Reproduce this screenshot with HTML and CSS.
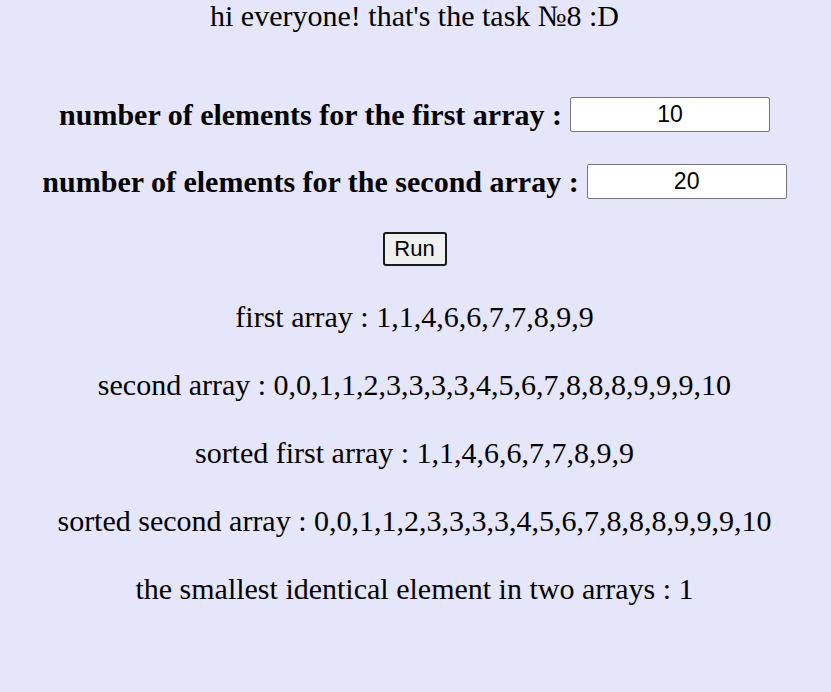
FILE: index.html
```html
<!DOCTYPE html>
<html>
<head>
<meta charset="utf-8">
<link rel="stylesheet" href="styles.css">
</head>
<body>
<div class="page">
  <div class="title">hi everyone! that's the task №8 :D</div>
  <div class="form">
    <div class="row"><label class="label">number of elements for the first array :</label><input class="num" type="text" value="10"></div>
    <div class="row"><label class="label">number of elements for the second array :</label><input class="num" type="text" value="20"></div>
    <div class="row"><button class="run">Run</button></div>
  </div>
  <div class="results">
    <div class="line">first array : 1,1,4,6,6,7,7,8,9,9</div>
    <div class="line">second array : 0,0,1,1,2,3,3,3,3,4,5,6,7,8,8,8,9,9,9,10</div>
    <div class="line">sorted first array : 1,1,4,6,6,7,7,8,9,9</div>
    <div class="line">sorted second array : 0,0,1,1,2,3,3,3,3,4,5,6,7,8,8,8,9,9,9,10</div>
    <div class="line">the smallest identical element in two arrays : 1</div>
  </div>
</div>
</body>
</html>
```
FILE: styles.css
```css
html, body {
  margin: 0;
  padding: 0;
  background: #e6e6fa;
  height: 100%;
}
.page {
  font-family: "Liberation Serif", "Times New Roman", serif;
  font-size: 30px;
  color: #000;
  text-align: center;
  display: flex;
  flex-direction: column;
  padding-right: 2px;
}
.title {
  height: 32px;
  line-height: 32px;
  margin-bottom: 49px;
}
.form {
  display: flex;
  flex-direction: column;
}
.row {
  height: 67px;
  display: flex;
  align-items: center;
  justify-content: center;
  gap: 8px;
}
.label {
  font-weight: bold;
}
.num {
  width: 200px;
  height: 35px;
  box-sizing: border-box;
  border: 1px solid #767676;
  border-radius: 2px;
  background: #fff;
  font-family: "Liberation Sans", Arial, sans-serif;
  font-size: 23px;
  text-align: center;
  padding: 0 2px;
  margin: 0;
}
.run {
  font-family: "Liberation Sans", Arial, sans-serif;
  font-size: 22px;
  height: 34px;
  width: 64px;
  background: #efefef;
  border: 2px solid #1a1a1a;
  border-radius: 3px;
  padding: 0;
  color: #000;
}
.results {
  display: flex;
  flex-direction: column;
  margin-top: 1px;
}
.line {
  height: 68px;
  line-height: 68px;
}
```
